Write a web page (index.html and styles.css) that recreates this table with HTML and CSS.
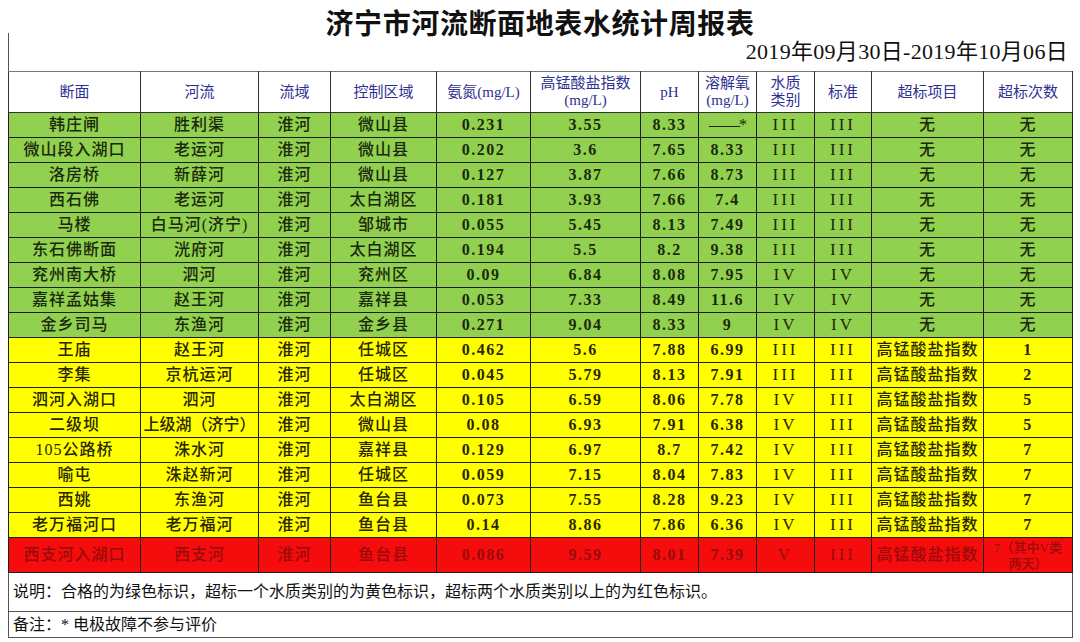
FILE: index.html
```html
<!DOCTYPE html>
<html lang="zh-CN">
<head>
<meta charset="utf-8">
<title>济宁市河流断面地表水统计周报表</title>
<link rel="stylesheet" href="styles.css">
</head>
<body>
<div class="page">
  <h1 class="title">济宁市河流断面地表水统计周报表</h1>
  <div class="daterow"><span class="date">2019年09月30日-2019年10月06日</span></div>
  <table class="report">
    <colgroup>
      <col class="c1"><col class="c2"><col class="c3"><col class="c4"><col class="c5"><col class="c6">
      <col class="c7"><col class="c8"><col class="c9"><col class="c10"><col class="c11"><col class="c12">
    </colgroup>
    <thead>
      <tr class="head">
        <th>断面</th><th>河流</th><th>流域</th><th>控制区域</th><th>氨氮(mg/L)</th>
        <th>高锰酸盐指数<br>(mg/L)</th><th>pH</th><th>溶解氧<br>(mg/L)</th><th>水质<br>类别</th>
        <th>标准</th><th>超标项目</th><th>超标次数</th>
      </tr>
    </thead>
    <tbody>
      <tr class="g"><td>韩庄闸</td><td>胜利渠</td><td>淮河</td><td>微山县</td><td class="n">0.231</td><td class="n">3.55</td><td class="n">8.33</td><td class="dash">——*</td><td class="rn">III</td><td class="rn">III</td><td>无</td><td>无</td></tr>
      <tr class="g"><td>微山段入湖口</td><td>老运河</td><td>淮河</td><td>微山县</td><td class="n">0.202</td><td class="n">3.6</td><td class="n">7.65</td><td class="n">8.33</td><td class="rn">III</td><td class="rn">III</td><td>无</td><td>无</td></tr>
      <tr class="g"><td>洛房桥</td><td>新薛河</td><td>淮河</td><td>微山县</td><td class="n">0.127</td><td class="n">3.87</td><td class="n">7.66</td><td class="n">8.73</td><td class="rn">III</td><td class="rn">III</td><td>无</td><td>无</td></tr>
      <tr class="g"><td>西石佛</td><td>老运河</td><td>淮河</td><td>太白湖区</td><td class="n">0.181</td><td class="n">3.93</td><td class="n">7.66</td><td class="n">7.4</td><td class="rn">III</td><td class="rn">III</td><td>无</td><td>无</td></tr>
      <tr class="g"><td>马楼</td><td>白马河(济宁)</td><td>淮河</td><td>邹城市</td><td class="n">0.055</td><td class="n">5.45</td><td class="n">8.13</td><td class="n">7.49</td><td class="rn">III</td><td class="rn">III</td><td>无</td><td>无</td></tr>
      <tr class="g"><td>东石佛断面</td><td>洸府河</td><td>淮河</td><td>太白湖区</td><td class="n">0.194</td><td class="n">5.5</td><td class="n">8.2</td><td class="n">9.38</td><td class="rn">III</td><td class="rn">III</td><td>无</td><td>无</td></tr>
      <tr class="g"><td>兖州南大桥</td><td>泗河</td><td>淮河</td><td>兖州区</td><td class="n">0.09</td><td class="n">6.84</td><td class="n">8.08</td><td class="n">7.95</td><td class="rn">IV</td><td class="rn">IV</td><td>无</td><td>无</td></tr>
      <tr class="g"><td>嘉祥孟姑集</td><td>赵王河</td><td>淮河</td><td>嘉祥县</td><td class="n">0.053</td><td class="n">7.33</td><td class="n">8.49</td><td class="n">11.6</td><td class="rn">IV</td><td class="rn">IV</td><td>无</td><td>无</td></tr>
      <tr class="g"><td>金乡司马</td><td>东渔河</td><td>淮河</td><td>金乡县</td><td class="n">0.271</td><td class="n">9.04</td><td class="n">8.33</td><td class="n">9</td><td class="rn">IV</td><td class="rn">IV</td><td>无</td><td>无</td></tr>
      <tr class="y"><td>王庙</td><td>赵王河</td><td>淮河</td><td>任城区</td><td class="n">0.462</td><td class="n">5.6</td><td class="n">7.88</td><td class="n">6.99</td><td class="rn">III</td><td class="rn">III</td><td>高锰酸盐指数</td><td class="n">1</td></tr>
      <tr class="y"><td>李集</td><td>京杭运河</td><td>淮河</td><td>任城区</td><td class="n">0.045</td><td class="n">5.79</td><td class="n">8.13</td><td class="n">7.91</td><td class="rn">III</td><td class="rn">III</td><td>高锰酸盐指数</td><td class="n">2</td></tr>
      <tr class="y"><td>泗河入湖口</td><td>泗河</td><td>淮河</td><td>太白湖区</td><td class="n">0.105</td><td class="n">6.59</td><td class="n">8.06</td><td class="n">7.78</td><td class="rn">IV</td><td class="rn">III</td><td>高锰酸盐指数</td><td class="n">5</td></tr>
      <tr class="y"><td>二级坝</td><td class="tight">上级湖（济宁）</td><td>淮河</td><td>微山县</td><td class="n">0.08</td><td class="n">6.93</td><td class="n">7.91</td><td class="n">6.38</td><td class="rn">IV</td><td class="rn">III</td><td>高锰酸盐指数</td><td class="n">5</td></tr>
      <tr class="y"><td>105公路桥</td><td>洙水河</td><td>淮河</td><td>嘉祥县</td><td class="n">0.129</td><td class="n">6.97</td><td class="n">8.7</td><td class="n">7.42</td><td class="rn">IV</td><td class="rn">III</td><td>高锰酸盐指数</td><td class="n">7</td></tr>
      <tr class="y"><td>喻屯</td><td>洙赵新河</td><td>淮河</td><td>任城区</td><td class="n">0.059</td><td class="n">7.15</td><td class="n">8.04</td><td class="n">7.83</td><td class="rn">IV</td><td class="rn">III</td><td>高锰酸盐指数</td><td class="n">7</td></tr>
      <tr class="y"><td>西姚</td><td>东渔河</td><td>淮河</td><td>鱼台县</td><td class="n">0.073</td><td class="n">7.55</td><td class="n">8.28</td><td class="n">9.23</td><td class="rn">IV</td><td class="rn">III</td><td>高锰酸盐指数</td><td class="n">7</td></tr>
      <tr class="y"><td>老万福河口</td><td>老万福河</td><td>淮河</td><td>鱼台县</td><td class="n">0.14</td><td class="n">8.86</td><td class="n">7.86</td><td class="n">6.36</td><td class="rn">IV</td><td class="rn">III</td><td>高锰酸盐指数</td><td class="n">7</td></tr>
      <tr class="r"><td>西支河入湖口</td><td>西支河</td><td>淮河</td><td>鱼台县</td><td class="n">0.086</td><td class="n">9.59</td><td class="n">8.01</td><td class="n">7.39</td><td class="rn">V</td><td class="rn">III</td><td>高锰酸盐指数</td><td class="two">7（其中V类<br>两天）</td></tr>
      <tr class="note"><td colspan="12">说明：合格的为绿色标识，超标一个水质类别的为黄色标识，超标两个水质类别以上的为红色标识。</td></tr>
      <tr class="note2"><td colspan="12">备注：* 电极故障不参与评价</td></tr>
    </tbody>
  </table>
</div>
</body>
</html>
```

FILE: styles.css
```css
* { box-sizing: border-box; }
html, body { margin: 0; padding: 0; background: #ffffff; }
.page {
  width: 1080px;
  height: 642px;
  overflow: hidden;
  font-family: "Liberation Serif", "Noto Sans CJK SC", serif;
  color: #111;
}
.title {
  margin: 0;
  height: 33px;
  padding-top: 6px;
  font-family: "Noto Sans CJK SC", sans-serif;
  font-size: 28px;
  line-height: 32px;
  font-weight: 700;
  letter-spacing: 0.6px;
  text-align: center;
  color: #111;
}
.daterow {
  margin-left: 8px;
  width: 1064px;
  height: 38px;
  border-left: 1px solid #555;
  display: flex;
  justify-content: flex-end;
  align-items: center;
  padding-right: 4px;
}
.date {
  font-size: 22px;
  line-height: 26px;
  letter-spacing: 0.3px;
  color: #111;
}
.report {
  margin-left: 8px;
  width: 1064px;
  border-collapse: collapse;
  table-layout: fixed;
}
.c1 { width: 132px; } .c2 { width: 118px; } .c3 { width: 72px; } .c4 { width: 106px; }
.c5 { width: 94px; } .c6 { width: 110px; } .c7 { width: 58px; } .c8 { width: 58px; }
.c9 { width: 58px; } .c10 { width: 57px; } .c11 { width: 112px; } .c12 { width: 89px; }

.report th, .report td {
  padding: 0;
  text-align: center;
  vertical-align: middle;
  white-space: nowrap;
  overflow: hidden;
}
.head th {
  height: 41px;
  font-weight: 400;
  font-size: 15px;
  line-height: 17px;
  color: #2e3192;
  background: #fff;
  border: 1px solid #333;
  border-top-color: #777;
}
.report tbody td {
  height: 25px;
  font-size: 16px;
  line-height: 20px;
  letter-spacing: 1px;
  border: 1px solid #1e1e1e;
  font-weight: 500;
}
.report tbody td.n { font-weight: 700; letter-spacing: 1.5px; }
.g td { background: #92d050; color: #1a2a0c; }
.y td { background: #ffff00; color: #2a2600; }
.r td { background: #f50d0d; color: #9a0a0a; height: 39px; }
.report tbody td.rn { letter-spacing: 3px; font-weight: 400; font-size: 17px; }
.report tbody td.dash { text-align: right; padding-right: 10px; letter-spacing: -1px; font-weight: 400; }
.report tbody td.tight { letter-spacing: 0; }
.report tbody td.two {
  white-space: normal;
  font-size: 13px;
  line-height: 16px;
  letter-spacing: 0;
  vertical-align: top;
  padding-top: 2px;
}
.report tbody .note td {
  height: 39px;
  text-align: left;
  padding-left: 4px;
  font-weight: 400;
  letter-spacing: 0;
  color: #111;
  background: #fff;
  border-color: #555;
}
.report tbody .note2 td {
  height: 26px;
  text-align: left;
  padding-left: 4px;
  font-weight: 400;
  letter-spacing: 0;
  color: #111;
  background: #fff;
  border-color: #555;
}
```
